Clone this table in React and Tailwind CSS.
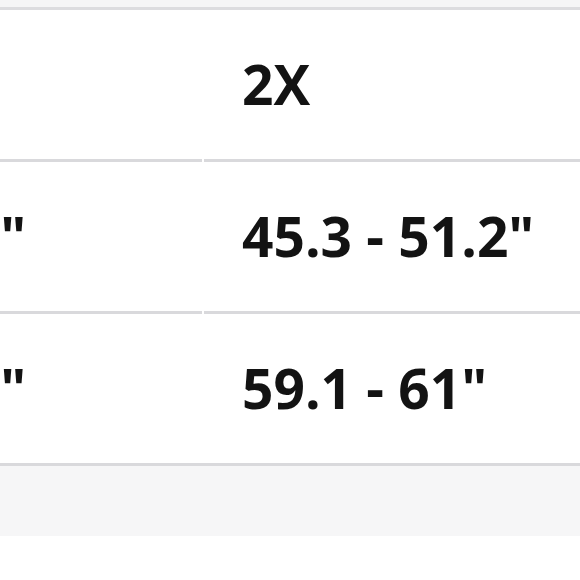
import React from "react";

const rows = [
  { a: "XL", b: "2X", border: "gap" },
  { a: '41.3 - 45.3"', b: '45.3 - 51.2"', border: "gap" },
  { a: '55.1 - 59.1"', b: '59.1 - 61"', border: "full" },
];

export default function App() {
  return (
    <div className="w-[580px] h-[580px] overflow-hidden bg-white" style={{ fontFamily: '"Open Sans", "Noto Sans", sans-serif' }}>
      <div className="h-[7px] bg-[#f5f5f6]" />
      <div className="h-[3px] bg-[#dcdcdf]" />
      <div className="-ml-[304px] w-[1200px]">
        {rows.map((r, i) => (
          <div key={i} className={r.border === "full" ? "flex border-b-[3px] border-[#d9d9dc]" : "flex"}>
            <div className={r.border === "gap" ? "w-[506px] mr-[2px] h-[152px] border-b-[3px] border-[#d9d9dc] flex items-center pl-[38px] pb-[2px]" : "w-[508px] h-[149px] flex items-center pl-[38px] pb-[2px]"}>
              <span className="text-[55px] font-bold text-[#131313] leading-none whitespace-nowrap">{r.a}</span>
            </div>
            <div className={r.border === "gap" ? "flex-1 h-[152px] border-b-[3px] border-[#d9d9dc] flex items-center pl-[38px] pb-[2px]" : "flex-1 h-[149px] flex items-center pl-[38px] pb-[2px]"}>
              <span className="text-[55px] font-bold text-[#131313] leading-none whitespace-nowrap">{r.b}</span>
            </div>
          </div>
        ))}
      </div>
      <div className="h-[70px] bg-[#f6f6f7]" />
    </div>
  );
}
